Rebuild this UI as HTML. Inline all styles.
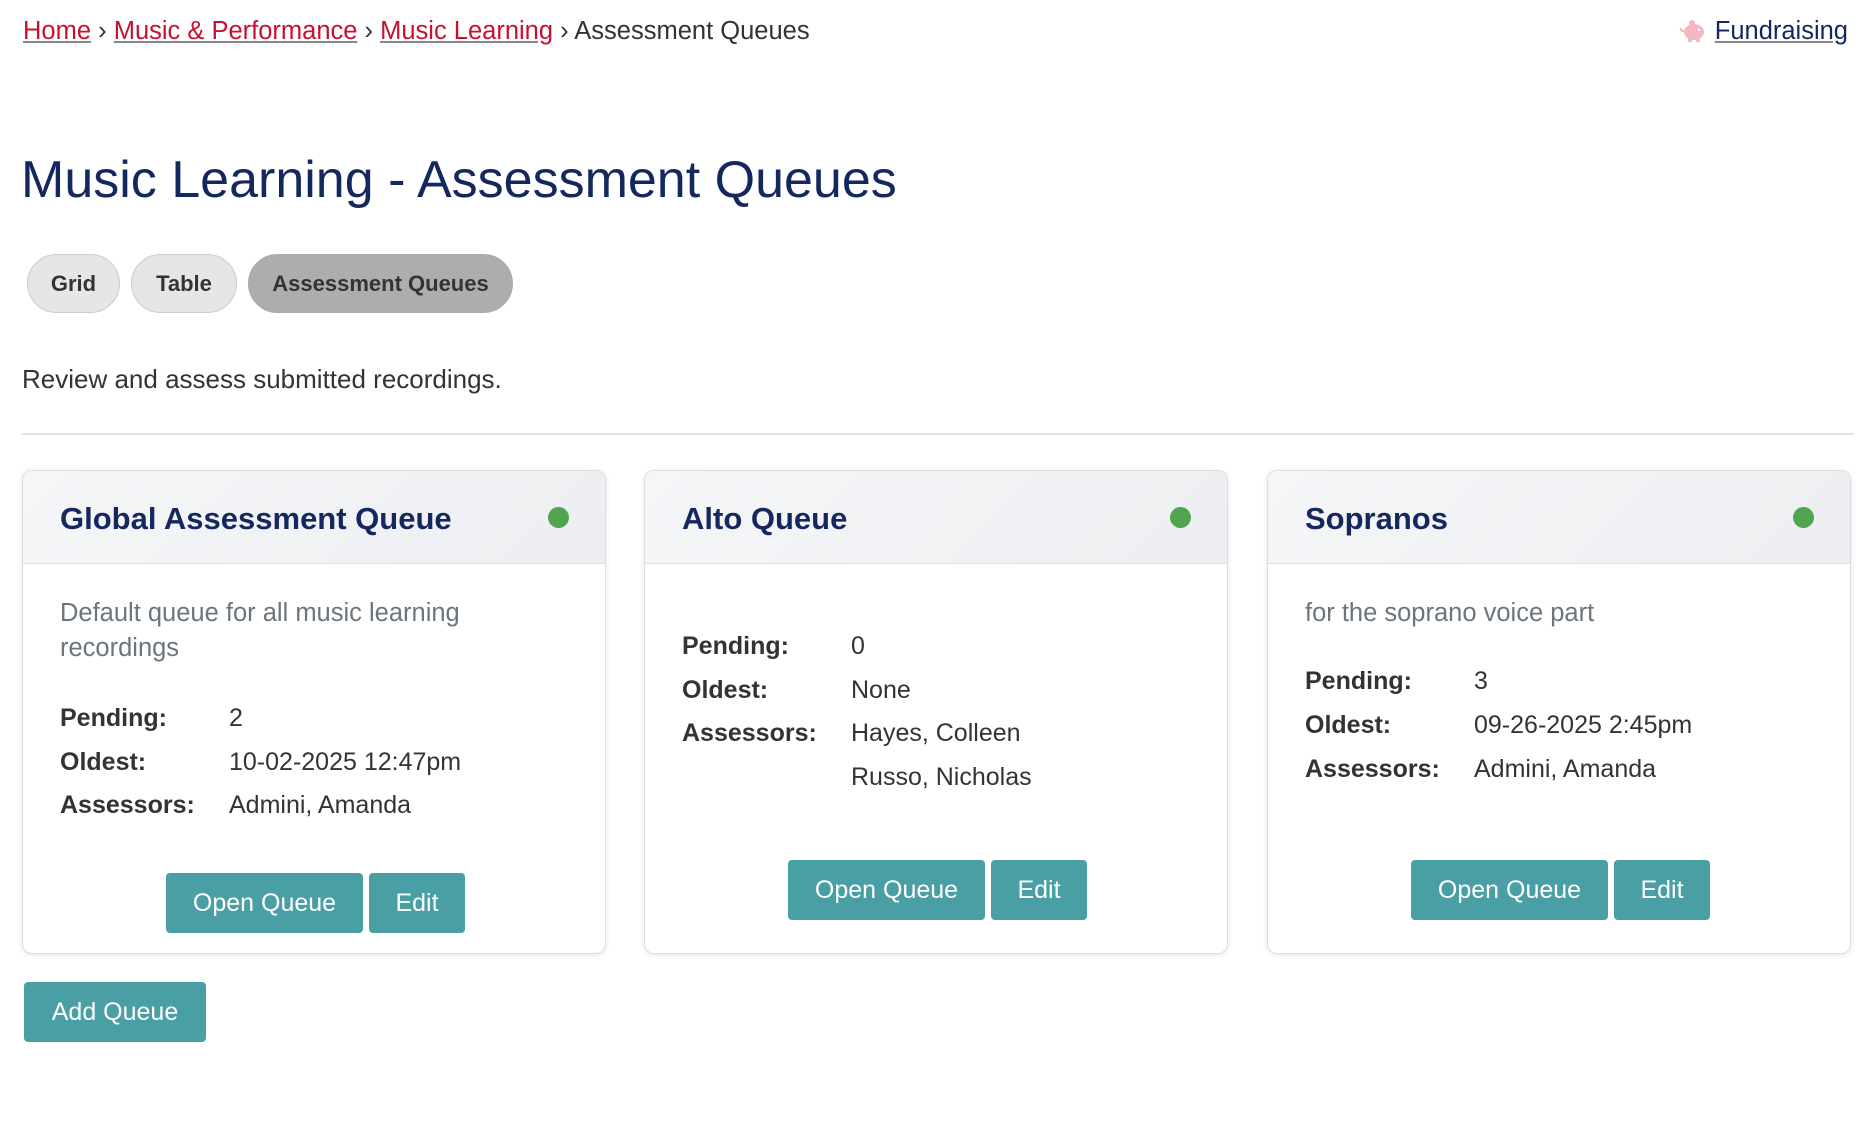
<!DOCTYPE html>
<html><head><meta charset="utf-8"><style>
*{box-sizing:border-box;margin:0;padding:0}
body{width:1874px;height:1140px;background:#fff;font-family:"Liberation Sans",sans-serif;color:#333;position:relative;overflow:hidden}
.a{position:absolute;white-space:nowrap}
.bc{top:16px;left:23px;font-size:25.5px;line-height:30px;color:#333}
.bc a{color:#c8102e;text-decoration:underline;text-decoration-color:#888}
.fund{top:16px;right:26px;font-size:25.5px;line-height:30px}
.fund a{color:#14285f;text-decoration:underline;text-decoration-color:#888}
h1{position:absolute;top:148px;left:21px;font-size:52px;font-weight:normal;color:#14285f;line-height:64px;white-space:nowrap}
.pill{position:absolute;top:254px;height:59px;border-radius:30px;background:#e6e6e6;border:1px solid #ccc;font-size:22px;font-weight:bold;color:#333;display:flex;align-items:center;justify-content:center}
.desc{top:364px;left:22px;font-size:26px;line-height:30px}
.hr{position:absolute;top:433px;left:22px;width:1832px;height:2px;background:#e3e3e3}
.card{position:absolute;top:470px;width:584px;height:484px;border:1px solid #ddd;border-radius:10px;box-shadow:0 1px 6px rgba(0,0,0,.1);overflow:hidden;background:#fff}
.hd{position:absolute;top:0;left:0;right:0;height:93px;background:linear-gradient(135deg,#f5f6f8,#eceef1);border-bottom:1px solid #dde0e4}
.tt{position:absolute;left:37px;top:29px;font-size:31px;font-weight:bold;color:#14285f;line-height:38px}
.dot{position:absolute;right:36px;top:36px;width:21px;height:21px;border-radius:50%;background:#52a550}
.cd{position:absolute;left:37px;font-size:25.5px;line-height:35px;color:#6c757d;width:480px}
.row{position:absolute;left:37px;font-size:25px;line-height:30px;color:#333}
.row b{display:inline-block;width:169px}
.btn{position:absolute;height:60px;background:#4a9fa5;color:#fff;font-size:25px;border-radius:4px;display:flex;align-items:center;justify-content:center}
</style></head><body>
<div class="a bc"><a>Home</a> › <a>Music &amp; Performance</a> › <a>Music Learning</a> › Assessment Queues</div>
<div class="a fund"><svg width="28" height="22" viewBox="0 0 28 22" style="vertical-align:-3px;margin-right:8px"><ellipse cx="15" cy="12" rx="10" ry="8" fill="#f4b8c3"/><rect x="9" y="16" width="4" height="6" fill="#f4b8c3"/><rect x="17" y="16" width="4" height="6" fill="#f4b8c3"/><circle cx="13" cy="3" r="3" fill="#f4b8c3"/><path d="M5 11 Q1 11 2 8" stroke="#f4b8c3" stroke-width="2" fill="none"/><circle cx="20" cy="10" r="1.2" fill="#fff"/></svg><a>Fundraising</a></div>
<h1>Music Learning - Assessment Queues</h1>
<div class="pill" style="left:27px;width:93px">Grid</div>
<div class="pill" style="left:131px;width:106px">Table</div>
<div class="pill" style="left:248px;width:265px;background:#adadad;border-color:#aaa">Assessment Queues</div>
<div class="a desc">Review and assess submitted recordings.</div>
<div class="hr"></div>

<div class="card" style="left:22px">
<div class="hd"><div class="tt">Global Assessment Queue</div><div class="dot"></div></div>
<div class="cd" style="top:125px">Default queue for all music learning recordings</div>
<div class="row" style="top:232px"><b>Pending:</b>2</div>
<div class="row" style="top:276px"><b>Oldest:</b>10-02-2025 12:47pm</div>
<div class="row" style="top:319px"><b>Assessors:</b>Admini, Amanda</div>
<div class="btn" style="left:143px;top:402px;width:197px">Open Queue</div>
<div class="btn" style="left:346px;top:402px;width:96px">Edit</div>
</div>

<div class="card" style="left:644px">
<div class="hd"><div class="tt">Alto Queue</div><div class="dot"></div></div>
<div class="row" style="top:160px"><b>Pending:</b>0</div>
<div class="row" style="top:204px"><b>Oldest:</b>None</div>
<div class="row" style="top:247px"><b>Assessors:</b>Hayes, Colleen</div>
<div class="row" style="top:291px"><b></b>Russo, Nicholas</div>
<div class="btn" style="left:143px;top:389px;width:197px">Open Queue</div>
<div class="btn" style="left:346px;top:389px;width:96px">Edit</div>
</div>

<div class="card" style="left:1267px">
<div class="hd"><div class="tt">Sopranos</div><div class="dot"></div></div>
<div class="cd" style="top:125px">for the soprano voice part</div>
<div class="row" style="top:195px"><b>Pending:</b>3</div>
<div class="row" style="top:239px"><b>Oldest:</b>09-26-2025 2:45pm</div>
<div class="row" style="top:283px"><b>Assessors:</b>Admini, Amanda</div>
<div class="btn" style="left:143px;top:389px;width:197px">Open Queue</div>
<div class="btn" style="left:346px;top:389px;width:96px">Edit</div>
</div>

<div class="btn" style="left:24px;top:982px;width:182px">Add Queue</div>
</body></html>
